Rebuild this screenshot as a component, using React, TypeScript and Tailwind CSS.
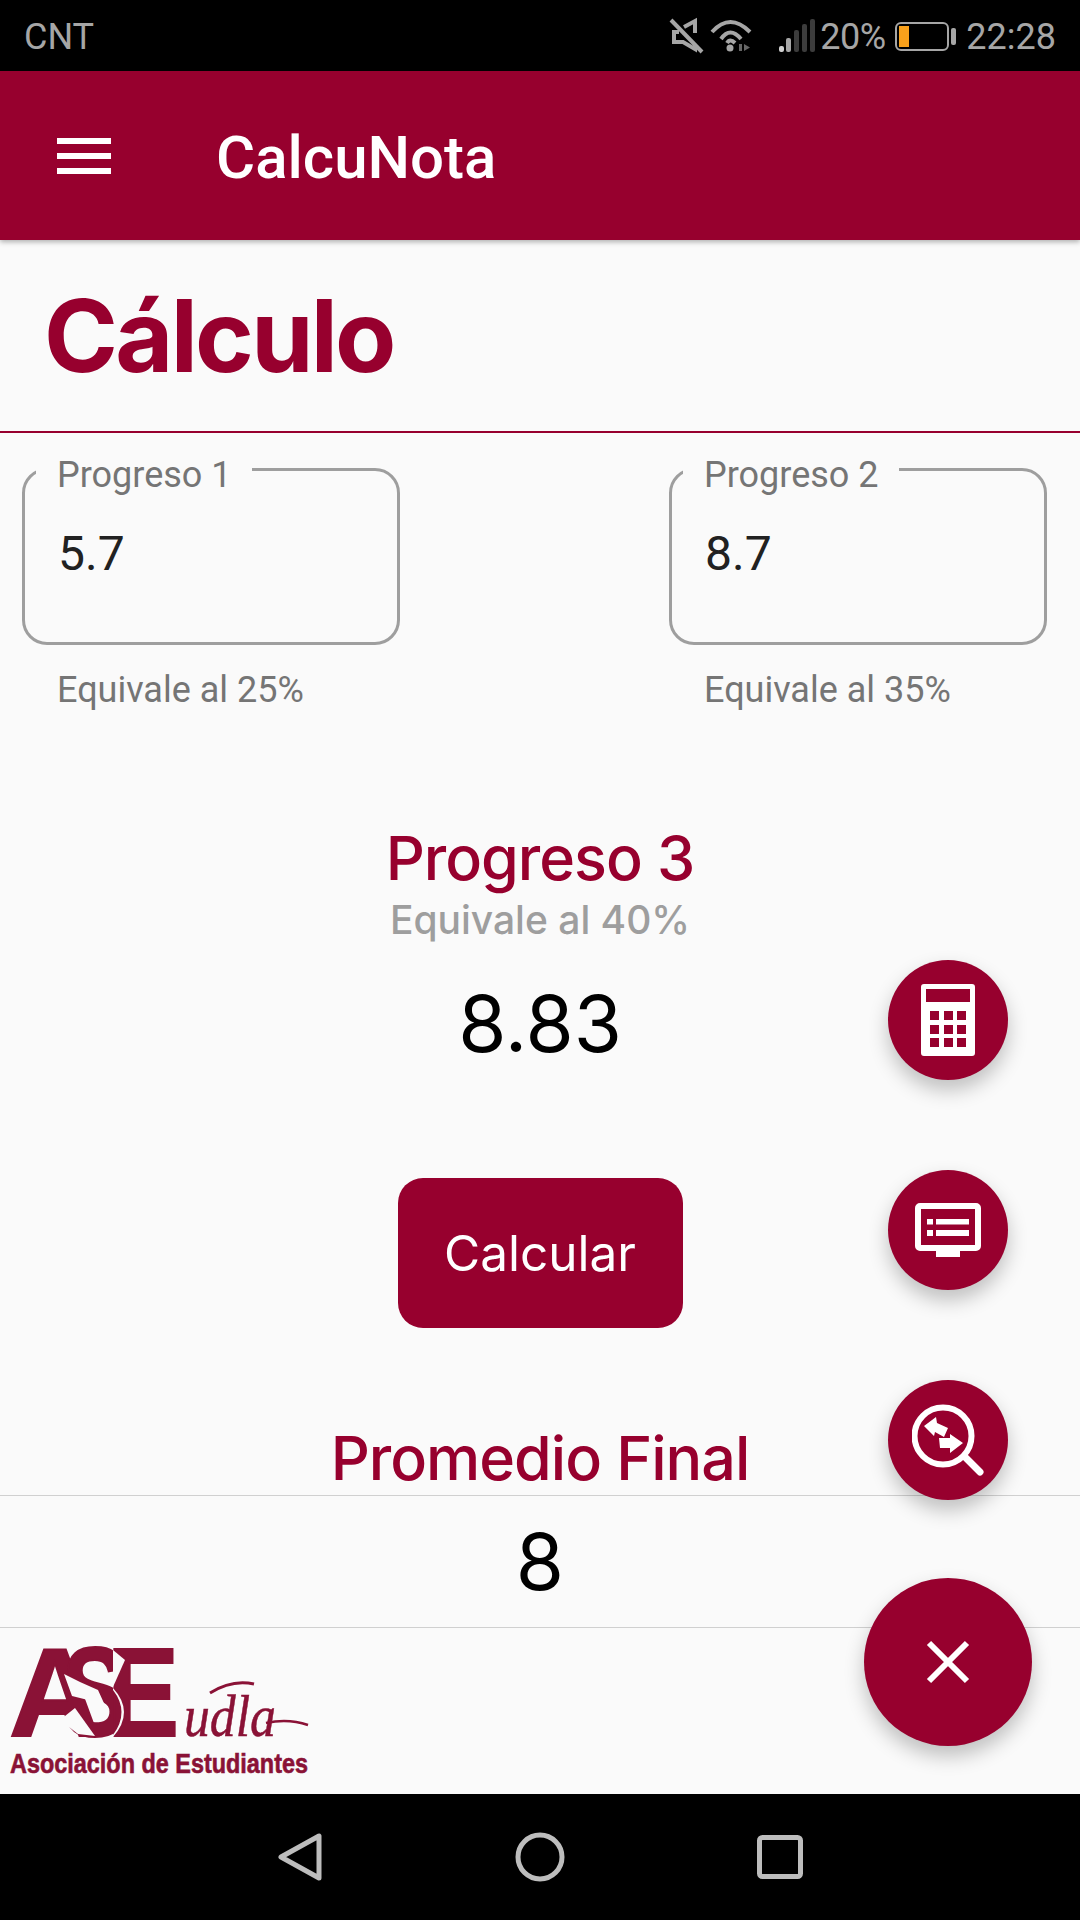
const Field = ({ label, value, hint }: { label: string; value: string; hint: string }) => (
  <div className="w-[378px]">
    <div className="relative h-[177px] rounded-[25px] border-[3px] border-[#9e9e9e] pl-[33px] pt-[57px]">
      <span className="absolute left-[11px] top-[-18px] bg-[#fafafa] pl-[21px] pr-[20px] text-[36px] leading-[44px] text-[#757575]">
        {label}
      </span>
      <span className="text-[48px] leading-[52px] text-[#212121]">{value}</span>
    </div>
    <p className="mt-[23px] pl-[35px] text-[36px] leading-[44px] text-[#757575]">{hint}</p>
  </div>
);

const Fab = ({ top, children }: { top: string; children: React.ReactNode }) => (
  <div
    className={`absolute right-[72px] ${top} flex h-[120px] w-[120px] items-center justify-center rounded-full bg-[#97002e] shadow-[0_10px_20px_rgba(0,0,0,0.24)]`}
  >
    {children}
  </div>
);

export default function App() {
  return (
    <div className="relative flex h-[1920px] w-[1080px] flex-col overflow-hidden bg-[#fafafa] font-['Roboto',sans-serif]">
      {/* Status bar */}
      <div className="flex h-[71px] items-center justify-between bg-black pl-[24px] pr-[24px] text-[36px] text-[#a6a6a6]">
        <span className="pt-[3px]">CNT</span>
        <div className="flex items-center">
          <svg width="240" height="71" viewBox="0 0 240 71" className="mr-[3px]">
            <g stroke="#a6a6a6" fill="none" strokeWidth="4">
              <path d="M107 27L118 21V33M118 44V49L106 42H97V32H102" />
              <path d="M94 20L125 52" />
              <path d="M135 32Q153 12 173 32M144 39Q153 26 164 39M150 43Q153 38 158 43" />
            </g>
            <circle cx="153" cy="48" r="3.5" fill="#a6a6a6" />
            <rect x="162" y="44" width="3" height="7" fill="#666" />
            <path d="M167 44l6 3.5-6 3.5z" fill="#666" />
            <rect x="202" y="46" width="5" height="6" rx="2" fill="#d0d0d0" />
            <rect x="209" y="38" width="5" height="14" rx="2" fill="#a6a6a6" />
            <rect x="217" y="30" width="5" height="22" rx="2" fill="#3c3c3c" />
            <rect x="225" y="24" width="5" height="28" rx="2" fill="#3c3c3c" />
            <rect x="233" y="19" width="5" height="33" rx="2" fill="#3c3c3c" />
          </svg>
          <span className="w-[65px] pt-[3px] text-[36px] tracking-[-0.5px]">20%</span>
          <svg width="62" height="71" viewBox="0 0 62 71" className="ml-[10px] mr-[9px]">
            <rect x="1" y="23" width="52" height="27" rx="5" stroke="#a6a6a6" strokeWidth="2" fill="none" />
            <rect x="4" y="26" width="10" height="21" fill="#f9a11b" />
            <rect x="56" y="28" width="5" height="17" rx="2" fill="#a6a6a6" />
          </svg>
          <span className="pt-[3px]">22:28</span>
        </div>
      </div>

      {/* App bar */}
      <div className="z-10 flex h-[169px] items-center bg-[#97002e] pl-[57px] shadow-[0_2px_5px_rgba(0,0,0,0.3)]">
        <div className="flex w-[54px] flex-col gap-[9px]">
          <div className="h-[6px] w-[54px] bg-white" />
          <div className="h-[6px] w-[54px] bg-white" />
          <div className="h-[6px] w-[54px] bg-white" />
        </div>
        <span className="ml-[105px] pt-[5px] text-[60px] font-medium text-white">CalcuNota</span>
      </div>

      {/* Title */}
      <div className="flex h-[193px] items-center border-b-[2px] border-[#97002e] pl-[44px]">
        <h1 className="pt-[1px] font-['Inter',sans-serif] text-[100px] font-bold tracking-[-2.7px] text-[#97002e]">Cálculo</h1>
      </div>

      {/* Fields */}
      <div className="mt-[35px] flex justify-between pl-[22px] pr-[33px]">
        <Field label="Progreso 1" value="5.7" hint="Equivale al 25%" />
        <Field label="Progreso 2" value="8.7" hint="Equivale al 35%" />
      </div>

      <div className="mt-[111px] flex flex-col items-center">
        <h2 className="font-['Inter',sans-serif] text-[61px] font-medium leading-[70px] tracking-[-1px] text-[#97002e]">
          Progreso 3
        </h2>
        <p className="mt-[4px] font-['Inter',sans-serif] text-[39px] font-medium leading-[46px] text-[#9e9e9e]">Equivale al 40%</p>
        <p className="mt-[33px] font-['Inter',sans-serif] text-[78px] leading-[96px] text-black">8.83</p>
        <button className="mt-[106px] h-[150px] w-[285px] rounded-[25px] bg-[#97002e] font-['Inter',sans-serif] text-[49.500px] text-white">
          Calcular
        </button>
        <h2 className="mt-[94px] font-['Inter',sans-serif] text-[61px] font-medium leading-[73px] tracking-[-1px] text-[#97002e]">
          Promedio Final
        </h2>
      </div>

      {/* Result band */}
      <div className="flex h-[133px] items-center justify-center border-y-[1px] border-[#d0d0d0] font-['Inter',sans-serif] text-[78px] text-black">
        8
      </div>

      {/* Logo */}
      <div className="flex-1">
        <svg width="330" height="166" viewBox="0 1628 330 166" className="block">
          <g fill="#8a1236" stroke="#8a1236" strokeWidth="2" fontFamily="'Liberation Sans'" fontWeight="700" fontSize="126">
            <text x="9" y="1736" textLength="92" lengthAdjust="spacingAndGlyphs">A</text>
            <text x="62" y="1736" textLength="66" lengthAdjust="spacingAndGlyphs">S</text>
            <text x="107" y="1736" textLength="72" lengthAdjust="spacingAndGlyphs">E</text>
          </g>
          {/* white cuts where the letters cross */}
          <g fill="#fafafa">
            <path d="M60 1720L75 1708L95 1736L78 1734z" />
            <path d="M64 1674L72 1696L100 1703L108 1712L98 1690L80 1682z" />
            <path d="M113 1650L125 1660L113 1687z" />
            <path d="M113 1690Q130 1712 113 1735L113 1737Q135 1712 113 1688z" />
          </g>
          <text x="184" y="1736" fill="#8a1236" stroke="#8a1236" strokeWidth="0.5" fontFamily="'Liberation Serif'" fontStyle="italic" fontSize="60" textLength="92" lengthAdjust="spacingAndGlyphs">
            udla
          </text>
          <path d="M210 1693Q232 1679 254 1684" stroke="#8a1236" strokeWidth="3" fill="none" />
          <path d="M266 1723Q288 1718 308 1725" stroke="#8a1236" strokeWidth="2.5" fill="none" />
          <text x="10" y="1773" fill="#8a1236" stroke="#8a1236" strokeWidth="0.6" fontFamily="'Liberation Sans'" fontWeight="700" fontSize="27" textLength="298" lengthAdjust="spacingAndGlyphs">
            Asociación de Estudiantes
          </text>
        </svg>
      </div>

      {/* Nav bar */}
      <div className="flex h-[126px] items-center justify-center bg-black">
        <svg width="540" height="60" viewBox="0 0 540 60" fill="none" stroke="#bdbdbd" strokeWidth="5" strokeLinejoin="round">
          <path d="M11 30L49 9v42z" />
          <circle cx="270" cy="30" r="22" />
          <rect x="489.5" y="10.5" width="41" height="39" rx="3" />
        </svg>
      </div>

      {/* FABs */}
      <Fab top="top-[960px]">
        <svg width="54" height="72" viewBox="0 0 54 72">
          <path
            fillRule="evenodd"
            fill="#fff"
            d="M3 0h48a3 3 0 0 1 3 3v66a3 3 0 0 1-3 3H3a3 3 0 0 1-3-3V3a3 3 0 0 1 3-3zM5 5v13h44V5zM9 27v9h9v-9zM23 27v9h9v-9zM36 27v9h9v-9zM9 41v9h9v-9zM23 41v9h9v-9zM36 41v9h9v-9zM9 54v9h9v-9zM23 54v9h9v-9zM36 54v9h9v-9z"
          />
        </svg>
      </Fab>
      <Fab top="top-[1170px]">
        <svg width="66" height="54" viewBox="0 0 66 54">
          <path
            fillRule="evenodd"
            fill="#fff"
            d="M5 0h56a5 5 0 0 1 5 5v38a5 5 0 0 1-5 5H45v6H21v-6H5a5 5 0 0 1-5-5V5a5 5 0 0 1 5-5zM6 6v36h54V6zM12 16v5.500h6V16zM21 16v5.500h33V16zM12 27v6h6v-6zM21 27v6h33v-6z"
          />
        </svg>
      </Fab>
      <Fab top="top-[1380px]">
        <svg width="72" height="72" viewBox="0 0 72 72">
          <circle cx="31" cy="32" r="28.5" fill="none" stroke="#fff" strokeWidth="6" />
          <path d="M54 54l14 14" stroke="#fff" strokeWidth="7" strokeLinecap="round" />
          <path d="M12 22L24 13l1 6 11 5-4 9-9-5-1 4z" fill="#fff" />
          <path d="M51 39L38 49v-5H28L27 34h11v-4z" fill="#fff" />
        </svg>
      </Fab>
      <div className="absolute right-[48px] top-[1578px] flex h-[168px] w-[168px] items-center justify-center rounded-full bg-[#97002e] shadow-[0_10px_20px_rgba(0,0,0,0.24)]">
        <svg width="44" height="44" viewBox="0 0 44 44">
          <path d="M3 3l38 38M41 3L3 41" stroke="#fff" strokeWidth="6" />
        </svg>
      </div>
    </div>
  );
}
